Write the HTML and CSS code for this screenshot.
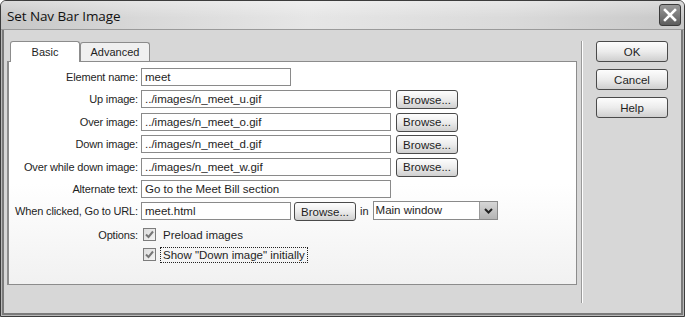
FILE: index.html
```html
<!DOCTYPE html>
<html lang="en">
<head>
    <meta charset="UTF-8">
    <title>Set Nav Bar Image</title>
    <link rel="stylesheet" href="styles.css">
</head>
<body>

<section class="dialog">
    <div class="titlebar">
        <span class="title">Set Nav Bar Image</span>
        <span class="close">
            <svg width="14" height="14" viewBox="0 0 14 14"><path d="M2 2 L12 12 M12 2 L2 12" stroke="#fff" stroke-width="2.6" stroke-linecap="square"/></svg>
        </span>
    </div>

    <div class="content">
        <div class="main">
            <div class="tabs">
                <span class="tab active">Basic</span>
                <span class="tab">Advanced</span>
            </div>
            <div class="panel">
                <div class="form">
                    <label class="label">Element name:</label>
                    <div class="field"><input class="text short" type="text" value="meet"></div>

                    <label class="label">Up image:</label>
                    <div class="field"><input class="text" type="text" value="../images/n_meet_u.gif"><button class="browse">Browse...</button></div>

                    <label class="label">Over image:</label>
                    <div class="field"><input class="text" type="text" value="../images/n_meet_o.gif"><button class="browse">Browse...</button></div>

                    <label class="label">Down image:</label>
                    <div class="field"><input class="text" type="text" value="../images/n_meet_d.gif"><button class="browse">Browse...</button></div>

                    <label class="label">Over while down image:</label>
                    <div class="field"><input class="text" type="text" value="../images/n_meet_w.gif"><button class="browse">Browse...</button></div>

                    <label class="label">Alternate text:</label>
                    <div class="field"><input class="text" type="text" value="Go to the Meet Bill section"></div>

                    <label class="label">When clicked, Go to URL:</label>
                    <div class="field">
                        <input class="text short" type="text" value="meet.html">
                        <button class="browse">Browse...</button>
                        <span class="in">in</span>
                        <span class="select">
                            <span class="select-value">Main window</span>
                            <span class="select-arrow">
                                <svg width="9" height="6" viewBox="0 0 9 6"><path d="M1 1 L4.5 4.5 L8 1" fill="none" stroke="#222" stroke-width="2"/></svg>
                            </span>
                        </span>
                    </div>
                </div>

                <div class="options">
                    <span class="label">Options:</span>
                    <div class="checks">
                        <div class="check">
                            <span class="box"><svg width="11" height="11" viewBox="0 0 11 11"><path d="M2 5.5 L4.5 8 L9 2.5" fill="none" stroke="#777" stroke-width="2"/></svg></span>
                            <span>Preload images</span>
                        </div>
                        <div class="check">
                            <span class="box"><svg width="11" height="11" viewBox="0 0 11 11"><path d="M2 5.5 L4.5 8 L9 2.5" fill="none" stroke="#777" stroke-width="2"/></svg></span>
                            <span class="focused">Show "Down image" initially</span>
                        </div>
                    </div>
                </div>
            </div>
        </div>

        <div class="separator"></div>

        <div class="actions">
            <button class="action">OK</button>
            <button class="action">Cancel</button>
            <button class="action">Help</button>
        </div>
    </div>
</section>

</body>
</html>
```

FILE: styles.css
```css
body {
    margin: 0;
    font-family: "Liberation Sans", Arial, sans-serif;
    font-size: 11px;
    color: #1e1e1e;
    background: #fff;
}

.dialog {
    width: 685px;
    height: 317px;
    box-sizing: border-box;
    border: 1px solid #3c3c3c;
    border-radius: 6px 6px 0 0;
    background-color: #d7d7d7;
    box-shadow: inset 0 0 0 1px #b8b8b8, inset 0 0 0 3px #7a7a7a;
    display: flex;
    flex-direction: column;
    overflow: hidden;
}

.titlebar {
    height: 28px;
    display: flex;
    align-items: center;
    justify-content: space-between;
    padding: 0 3px 0 6px;
    border-bottom: 1px solid #9a9a9a;
    background: linear-gradient(180deg, rgba(255,255,255,.35), rgba(255,255,255,0) 60%),
                linear-gradient(90deg, #c6c6c6 0%, #d8d8d8 20%, #e6e6e6 45%, #dadada 75%, #c8c8c8 100%);
}

.title {
    font-family: "Open Sans", "DejaVu Sans", sans-serif;
    font-size: 13.5px;
    color: #111;
    letter-spacing: -.1px;
    padding-top: 1px;
}

.close {
    width: 22px;
    height: 22px;
    box-sizing: border-box;
    border: 1px solid #3a3a3a;
    border-radius: 3px;
    background: linear-gradient(180deg, #9a9a9a, #5c5c5c);
    display: flex;
    align-items: center;
    justify-content: center;
}

.content {
    flex: 1;
    display: flex;
    padding: 11px 0 0 6px;
}

.main {
    width: 570px;
}

.tabs {
    display: flex;
    padding-left: 3px;
    height: 20px;
    align-items: flex-end;
}

.tab {
    box-sizing: border-box;
    height: 19px;
    width: 70px;
    border: 1px solid #8c8c8c;
    border-bottom: none;
    border-radius: 3px 3px 0 0;
    background: #f0f0f0;
    text-align: center;
    line-height: 18px;
}

.tab.active {
    height: 21px;
    background: #fff;
    position: relative;
    z-index: 1;
    margin-bottom: -1px;
    line-height: 21px;
}

.panel {
    box-sizing: border-box;
    height: 224px;
    border: 1px solid #8c8c8c;
    border-left: 2px solid #8c8c8c;
    background: linear-gradient(180deg, #fff 0%, #fff 55%, #f1f1f1 100%);
    padding-top: 6px;
}

.form {
    display: grid;
    grid-template-columns: 129px 1fr;
    column-gap: 3px;
    row-gap: 3.4px;
    grid-auto-rows: 19px;
}

.label {
    text-align: right;
    line-height: 18px;
    white-space: nowrap;
    letter-spacing: -.15px;
}

.field {
    display: flex;
    align-items: flex-start;
    gap: 3px;
}

.text {
    box-sizing: border-box;
    width: 250px;
    height: 18px;
    border: 1px solid #8a8a8a;
    background: #fff;
    font-family: inherit;
    font-size: 11.5px;
    color: #1e1e1e;
    padding: 0 3px;
    margin: 0;
}

.text.short {
    width: 150px;
}

.browse {
    box-sizing: border-box;
    width: 62px;
    height: 19px;
    margin: 0 0 0 2px;
    padding: 0;
    border: 1px solid #4a4a4a;
    border-radius: 3px;
    background: linear-gradient(180deg, #fdfdfd 0%, #ececec 50%, #cfcfcf 100%);
    font-family: inherit;
    font-size: 11.5px;
    color: #1e1e1e;
}

.field .text.short + .browse {
    margin-left: 0;
}

.in {
    line-height: 18px;
    margin: 0 1px;
}

.select {
    box-sizing: border-box;
    width: 125px;
    height: 19px;
    border: 1px solid #8a8a8a;
    background: #fff;
    display: flex;
    margin-top: -1px;
}

.select-value {
    flex: 1;
    padding-left: 2px;
    line-height: 17px;
    font-size: 11.5px;
}

.select-arrow {
    width: 17px;
    background: linear-gradient(180deg, #d6d6d6, #b4b4b4);
    border-left: 1px solid #9a9a9a;
    display: flex;
    align-items: center;
    justify-content: center;
}

.options {
    display: grid;
    grid-template-columns: 129px 1fr;
    column-gap: 5px;
    margin-top: 5px;
}

.checks {
    display: flex;
    flex-direction: column;
    gap: 3px;
}

.check {
    display: flex;
    align-items: center;
    gap: 7px;
    height: 17px;
    font-size: 11.5px;
}

.box {
    box-sizing: border-box;
    width: 13px;
    height: 13px;
    border: 1px solid #7c7c7c;
    background: linear-gradient(135deg, #dcdcdc, #f4f4f4);
    display: flex;
    align-items: center;
    justify-content: center;
}

.focused {
    outline: 1px dotted #222;
    outline-offset: 1px;
    padding: 0 1px;
    margin-left: -1px;
}

.separator {
    width: 1px;
    margin: 0 0 13px 4px;
    background: #9a9a9a;
    border-right: 1px solid #fff;
}

.actions {
    display: flex;
    flex-direction: column;
    gap: 7px;
    padding: 0 0 0 13px;
}

.action {
    box-sizing: border-box;
    width: 72px;
    height: 21px;
    margin: 0;
    padding: 0;
    border: 1px solid #4a4a4a;
    border-radius: 3px;
    background: linear-gradient(180deg, #fdfdfd 0%, #ececec 50%, #cfcfcf 100%);
    font-family: inherit;
    font-size: 11.5px;
    color: #1e1e1e;
}
```
